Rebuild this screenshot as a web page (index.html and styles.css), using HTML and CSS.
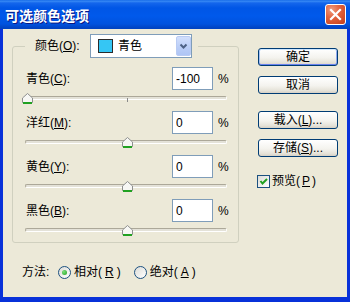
FILE: index.html
```html
<!DOCTYPE html>
<html lang="zh-CN">

<head>
    <meta charset="UTF-8">
    <meta name="viewport" content="width=device-width, initial-scale=1.0">
    <title>可选颜色选项</title>
    <link rel="stylesheet" href="styles.css">
</head>

<body>
    <div class="dialog">
        <div class="titlebar">
            <span class="title">可选颜色选项</span>
            <button class="close">
                <svg width="19" height="19" viewBox="0 0 19 19">
                    <path d="M5 5 L14 14 M14 5 L5 14" stroke="#fff" stroke-width="2.2" stroke-linecap="square" />
                </svg>
            </button>
        </div>

        <div class="content">
            <div class="left">
                <fieldset class="group">
                    <legend class="legend">
                        <span class="legend-label">颜色(<u>O</u>):</span>
                        <div class="combo">
                            <span class="swatch"></span>
                            <span class="combo-text">青色</span>
                            <span class="drop">
                                <svg width="13" height="18" viewBox="0 0 13 18">
                                    <path d="M3.5 7.5 L6.5 10.5 L9.5 7.5" fill="none" stroke="#4D6185" stroke-width="2" />
                                </svg>
                            </span>
                        </div>
                    </legend>

                    <div class="row">
                        <div class="field">
                            <span class="label">青色(<u>C</u>):</span>
                            <input class="num" type="text" value="-100">
                            <span class="pct">%</span>
                        </div>
                        <div class="slider">
                            <span class="track"></span>
                            <span class="tick"></span>
                            <svg class="thumb" style="left: -3px" width="11" height="11" viewBox="0 0 11 11">
                                <path d="M0.5 5 L5.5 0.5 L10.5 5 L10.5 9.5 L0.5 9.5 Z" fill="#F7F7F4" stroke="#8E8F8F" />
                                <path d="M1 10 H10" stroke="#21A121" stroke-width="2" />
                            </svg>
                        </div>
                    </div>

                    <div class="row">
                        <div class="field">
                            <span class="label">洋红(<u>M</u>):</span>
                            <input class="num" type="text" value="0">
                            <span class="pct">%</span>
                        </div>
                        <div class="slider">
                            <span class="track"></span>
                            <span class="tick"></span>
                            <svg class="thumb" style="left: 97px" width="11" height="11" viewBox="0 0 11 11">
                                <path d="M0.5 5 L5.5 0.5 L10.5 5 L10.5 9.5 L0.5 9.5 Z" fill="#F7F7F4" stroke="#8E8F8F" />
                                <path d="M1 10 H10" stroke="#21A121" stroke-width="2" />
                            </svg>
                        </div>
                    </div>

                    <div class="row">
                        <div class="field">
                            <span class="label">黄色(<u>Y</u>):</span>
                            <input class="num" type="text" value="0">
                            <span class="pct">%</span>
                        </div>
                        <div class="slider">
                            <span class="track"></span>
                            <span class="tick"></span>
                            <svg class="thumb" style="left: 97px" width="11" height="11" viewBox="0 0 11 11">
                                <path d="M0.5 5 L5.5 0.5 L10.5 5 L10.5 9.5 L0.5 9.5 Z" fill="#F7F7F4" stroke="#8E8F8F" />
                                <path d="M1 10 H10" stroke="#21A121" stroke-width="2" />
                            </svg>
                        </div>
                    </div>

                    <div class="row">
                        <div class="field">
                            <span class="label">黑色(<u>B</u>):</span>
                            <input class="num" type="text" value="0">
                            <span class="pct">%</span>
                        </div>
                        <div class="slider">
                            <span class="track"></span>
                            <span class="tick"></span>
                            <svg class="thumb" style="left: 97px" width="11" height="11" viewBox="0 0 11 11">
                                <path d="M0.5 5 L5.5 0.5 L10.5 5 L10.5 9.5 L0.5 9.5 Z" fill="#F7F7F4" stroke="#8E8F8F" />
                                <path d="M1 10 H10" stroke="#21A121" stroke-width="2" />
                            </svg>
                        </div>
                    </div>
                </fieldset>

                <div class="method">
                    <span class="method-label">方法:</span>
                    <span class="radio-item"><span class="radio on"></span>相对(<u>R</u>)</span>
                    <span class="radio-item"><span class="radio"></span>绝对(<u>A</u>)</span>
                </div>
            </div>

            <div class="right">
                <button class="btn default">确定</button>
                <button class="btn btn-near">取消</button>
                <button class="btn btn-far">载入(<u>L</u>)...</button>
                <button class="btn btn-near">存储(<u>S</u>)...</button>
                <div class="check-row">
                    <span class="checkbox">
                        <svg width="11" height="11" viewBox="0 0 11 11">
                            <path d="M2.5 5 L4.5 7.5 L9 3" fill="none" stroke="#21A121" stroke-width="2" />
                        </svg>
                    </span>
                    预览(<u>P</u>)
                </div>
            </div>
        </div>
    </div>
</body>

</html>
```

FILE: styles.css
```css
* {
    box-sizing: border-box;
}

body {
    margin: 0;
    font-family: "Liberation Sans", "Noto Sans CJK SC", sans-serif;
    font-size: 12px;
    line-height: 14px;
    color: #000;
}

.dialog {
    width: 350px;
    height: 302px;
    display: flex;
    flex-direction: column;
}

.titlebar {
    height: 29px;
    flex: none;
    display: flex;
    align-items: center;
    justify-content: space-between;
    padding: 0 4px 0 5px;
    background: linear-gradient(to bottom, #0A5FE4 0, #3A8CF5 1px, #1466EC 3px, #0056E6 8px, #0059EB 16px, #0052DE 24px, #0043C2 28px);
}

.title {
    color: #fff;
    font-family: "Noto Sans CJK SC", sans-serif;
    font-weight: bold;
    font-size: 14px;
    line-height: 16px;
    text-shadow: 1px 1px 0 #0A1883;
}

.close {
    width: 21px;
    height: 21px;
    padding: 0;
    border: 1px solid #fff;
    border-radius: 3px;
    background: radial-gradient(circle at 30% 25%, #EE9C80 0, #E3643F 40%, #C5401C 95%);
    display: flex;
}

.content {
    flex: 1;
    display: flex;
    background-color: #ECE9D8;
    border: solid #0831D9;
    border-width: 0 3px 5px;
}

.left {
    width: 236px;
    padding-left: 9px;
    display: flex;
    flex-direction: column;
}

.group {
    margin: 5px 0 0;
    padding: 9px 10px 0 12px;
    border: 1px solid #D0D0BF;
    border-radius: 3px;
    min-width: 0;
}

.legend {
    display: flex;
    align-items: center;
    height: 24px;
    padding: 0 6px 0 10px;
}

.legend-label {
    width: 55px;
}

.combo {
    width: 102px;
    height: 24px;
    border: 1px solid #7F9DB9;
    background-color: #fff;
    display: flex;
    align-items: center;
}

.swatch {
    width: 15px;
    height: 14px;
    margin-left: 7px;
    background-color: #35C6F4;
    border: 1px solid #2B2B2B;
}

.combo-text {
    margin-left: 5px;
}

.drop {
    margin-left: auto;
    width: 15px;
    height: 20px;
    border: 1px solid #B9CBF3;
    border-radius: 2px;
    background: linear-gradient(#D2DFFC, #B9CDF7 60%, #AFC5F5);
    display: flex;
    align-items: center;
    justify-content: center;
}

.field {
    height: 23px;
    display: flex;
    align-items: center;
}

.label {
    flex: 1;
    padding-left: 1px;
}

.num {
    width: 41px;
    height: 23px;
    margin: 0;
    border: 1px solid #7F9DB9;
    padding: 0 3px;
    font-family: "Liberation Sans", sans-serif;
    font-size: 12px;
    color: #000;
    background-color: #fff;
}

.pct {
    width: 10px;
    margin-left: 5px;
}

.slider {
    position: relative;
    height: 21px;
}

.row:last-child .slider {
    height: 20px;
}

.track {
    position: absolute;
    left: 0;
    right: 1px;
    top: 6px;
    height: 4px;
    border: 1px solid;
    border-color: #ACA899 #fff #fff #ACA899;
    border-radius: 2px;
    background-color: #E4E2D8;
}

.tick {
    position: absolute;
    left: 102px;
    top: 8px;
    width: 1px;
    height: 4px;
    background-color: #8A8A8A;
}

.thumb {
    position: absolute;
    top: 3px;
}

.method {
    display: flex;
    align-items: center;
    height: 16px;
    margin: 21px 0 0 10px;
}

.method-label {
    width: 36px;
}

.radio-item {
    display: flex;
    align-items: center;
    gap: 3px;
    margin-right: 13px;
}

.radio {
    width: 13px;
    height: 13px;
    border-radius: 50%;
    border: 1px solid #1C5180;
    background: linear-gradient(135deg, #DCDCD7, #fff);
    display: flex;
    align-items: center;
    justify-content: center;
}

.radio.on::after {
    content: "";
    width: 5px;
    height: 5px;
    border-radius: 50%;
    background: radial-gradient(circle at 35% 35%, #7BE07A, #21A121);
}

.right {
    display: flex;
    flex-direction: column;
    padding-top: 19px;
    margin-left: 19px;
}

.btn {
    width: 80px;
    height: 18px;
    padding: 0;
    border: 1px solid #003C74;
    border-radius: 3px;
    background: linear-gradient(#FFFFFF, #F4F3EE 55%, #E5E2D8 85%, #D6D0C5);
    font-family: "Liberation Sans", "Noto Sans CJK SC", sans-serif;
    font-size: 12px;
    line-height: 14px;
    color: #000;
}

.btn.default {
    box-shadow: inset 0 1px 0 #CEE7FF, inset 0 -1px 0 #6982EE, inset 1px 0 0 #A5C2F5, inset -1px 0 0 #8FA9F0;
}

.btn-near {
    margin-top: 10px;
}

.btn-far {
    margin-top: 17px;
}

.check-row {
    display: flex;
    align-items: center;
    gap: 2px;
    margin-top: 17px;
    margin-left: -1px;
}

.checkbox {
    width: 13px;
    height: 13px;
    border: 1px solid #1C5180;
    background: linear-gradient(135deg, #DCDCD7, #fff);
    display: flex;
}
```
